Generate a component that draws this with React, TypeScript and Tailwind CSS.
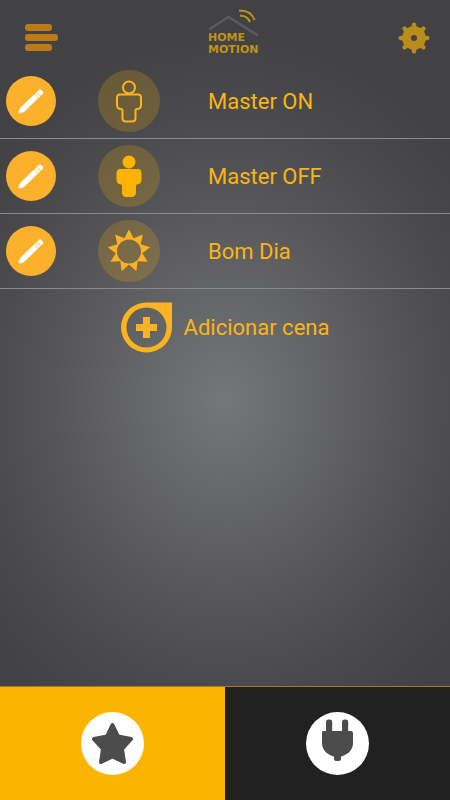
import type { ReactNode } from "react";

const BODY_PATH =
  "M22 24.500H40Q43 24.500 43 27.500V35Q43 39 39 39Q37.500 39 37.500 41V48Q37.500 51.500 34 51.500H28Q24.500 51.500 24.500 48V41Q24.500 39 23 39Q19 39 19 35V27.500Q19 24.500 22 24.500Z";

function starPoints(count: number, outer: number, inner: number, center: number) {
  return Array.from({ length: count * 2 }, (_, i) => {
    const angle = (Math.PI * i) / count - Math.PI / 2;
    const r = i % 2 === 0 ? outer : inner;
    return `${center + r * Math.cos(angle)},${center + r * Math.sin(angle)}`;
  }).join(" ");
}

function PersonOutline() {
  return (
    <svg viewBox="0 0 62 62" className="size-full" fill="none" stroke="#fcb322" strokeWidth="2" aria-hidden="true">
      <circle cx="31" cy="17.500" r="6" />
      <path d={BODY_PATH} />
    </svg>
  );
}

function PersonSolid() {
  return (
    <svg viewBox="0 0 62 62" className="size-full" fill="#fdb400" aria-hidden="true">
      <circle cx="31" cy="17" r="6.500" />
      <path d={BODY_PATH} stroke="#fdb400" />
    </svg>
  );
}

function Sun() {
  return (
    <svg viewBox="0 0 62 62" className="size-full" aria-hidden="true">
      <mask id="sun-hole">
        <rect width="62" height="62" fill="white" />
        <circle cx="31" cy="31.500" r="12" fill="black" />
      </mask>
      <polygon points={starPoints(9, 21.5, 13.5, 31)} fill="#fcb322" mask="url(#sun-hole)" />
    </svg>
  );
}

function Pencil() {
  return (
    <svg viewBox="0 0 50 50" className="size-full" fill="white" aria-hidden="true">
      <g transform="translate(13 37) rotate(-44)">
        <path d="M0 0L1 -1.500L5 -2.800H24V2.800H5L1 1.500Z" />
        <path d="M24.600 -2.800H27V2.800H24.600Z" />
        <path d="M27.600 -2.800H30Q32 -2.800 32 -1.500V1.500Q32 2.800 30 2.800H27.600Z" />
      </g>
    </svg>
  );
}

function Gear() {
  return (
    <svg viewBox="0 0 32 32" className="size-8" aria-hidden="true">
      <mask id="gear-hole">
        <rect width="32" height="32" fill="white" />
        <circle cx="16" cy="16" r="3" fill="black" />
      </mask>
      <g fill="#b98c1b" mask="url(#gear-hole)">
        <circle cx="16" cy="16" r="11.800" />
        {[0, 45, 90, 135, 180, 225, 270, 315].map((deg) => (
          <path key={deg} d="M12.500 6Q14 4 14 2Q14 0.500 16 0.500Q18 0.500 18 2Q18 4 19.500 6Z" transform={`rotate(${deg} 16 16)`} />
        ))}
      </g>
    </svg>
  );
}

function Logo() {
  return (
    <svg viewBox="0 0 54 48" className="h-12 w-[54px]" role="img" aria-label="Home Motion">
      <path d="M1 21.500L20.500 9L50 27.500" fill="none" stroke="#5b5b5d" strokeWidth="2.500" />
      <g fill="none" stroke="#bf931a" strokeWidth="2">
        <path d="M31 2.800C38 2 44 5 46.500 12" />
        <path d="M32 7.800C36 7.500 40 9.500 42 14" />
      </g>
      <g fill="#bf931a" className="font-['DejaVu_Sans',sans-serif] text-[11px] font-bold">
        <text x="0" y="33">HOME</text>
        <text x="0" y="45">MOTION</text>
      </g>
    </svg>
  );
}

function AddIcon() {
  return (
    <svg viewBox="0 0 51 51" className="size-[51px]" fill="#fcb322" aria-hidden="true">
      <path fillRule="evenodd" d="M25.500 0.500H51V25.500A25.500 25 0 1 1 25.500 0.500ZM25.500 5.500A20 20 0 1 0 25.500 45.500A20 20 0 1 0 25.500 5.500Z" />
      <path d="M22 15H29V22H36V29H29V36H22V29H15V22H22Z" />
    </svg>
  );
}

function Star() {
  return (
    <svg viewBox="0 0 63 63" className="size-full" aria-hidden="true">
      <path
        d="M31.500 13L37 24.500L50 27L41 37L43 50L31.500 44.500L20 50L22 37L13 27L26 24.500Z"
        fill="#4c4c4c"
        stroke="#4c4c4c"
        strokeWidth="4"
        strokeLinejoin="round"
      />
    </svg>
  );
}

function Plug() {
  return (
    <svg viewBox="0 0 63 63" className="size-full" fill="#4c4c4c" aria-hidden="true">
      <rect x="20" y="7.500" width="6.200" height="16" rx="2.500" />
      <rect x="36" y="7.500" width="6.200" height="16" rx="2.500" />
      <path d="M17 19H45Q47 19 47 21V31C47 38 42 42.500 35 44.500V47Q35 49 33 49H30Q28 49 28 47V44.500C21 42.500 16 38 16 31V21Q16 19 17 19Z" />
    </svg>
  );
}

const scenes: { name: string; icon: ReactNode }[] = [
  { name: "Master ON", icon: <PersonOutline /> },
  { name: "Master OFF", icon: <PersonSolid /> },
  { name: "Bom Dia", icon: <Sun /> },
];

export default function App() {
  return (
    <div className="flex min-h-screen flex-col bg-[#424244] bg-[radial-gradient(ellipse_310px_370px_at_50%_400px,#757678_0%,#656668_28%,#565658_55%,#4a4a4c_78%,#424244_100%)] font-[Roboto,sans-serif] text-[22px] text-[#fcb415]">
      <header className="grid h-16 grid-cols-[1fr_auto_1fr] items-center px-5">
        <button type="button" aria-label="Menu" className="flex w-10 flex-col gap-[3px] pt-[11px] pl-[5px]">
          <span className="h-[7px] w-[27px] rounded-[3px] bg-[#bd7a19]" />
          <span className="h-[7px] w-[33px] rounded-[3px] bg-[#bd7a19]" />
          <span className="h-[7px] w-[27px] rounded-[3px] bg-[#bd7a19]" />
        </button>
        <div className="pl-5">
          <Logo />
        </div>
        <button type="button" aria-label="Settings" className="justify-self-end pt-[11px]">
          <Gear />
        </button>
      </header>

      <main className="flex-1">
        <ul>
          {scenes.map((scene) => (
            <li key={scene.name} className="flex h-[75px] items-center border-b border-[#8b8b8d] pl-[6px]">
              <button type="button" aria-label={`Editar ${scene.name}`} className="size-[50px] shrink-0 rounded-full bg-[#fbb12b]">
                <Pencil />
              </button>
              <button type="button" className="ml-[42px] flex flex-1 items-center gap-12 text-left">
                <span className="size-[62px] shrink-0 rounded-full bg-[#fdb400]/20">{scene.icon}</span>
                <span>{scene.name}</span>
              </button>
            </li>
          ))}
        </ul>
        <button type="button" className="flex h-[76px] w-full items-center justify-center gap-3">
          <AddIcon />
          <span>Adicionar cena</span>
        </button>
      </main>

      <nav className="grid h-[114px] grid-cols-2 border-t border-[#a5782a]">
        <button type="button" aria-label="Favoritos" className="flex items-center justify-center bg-[#fdb400]">
          <span className="size-[63px] rounded-full bg-white">
            <Star />
          </span>
        </button>
        <button type="button" aria-label="Dispositivos" className="flex items-center justify-center bg-[#212121]">
          <span className="size-[63px] rounded-full bg-white">
            <Plug />
          </span>
        </button>
      </nav>
    </div>
  );
}
